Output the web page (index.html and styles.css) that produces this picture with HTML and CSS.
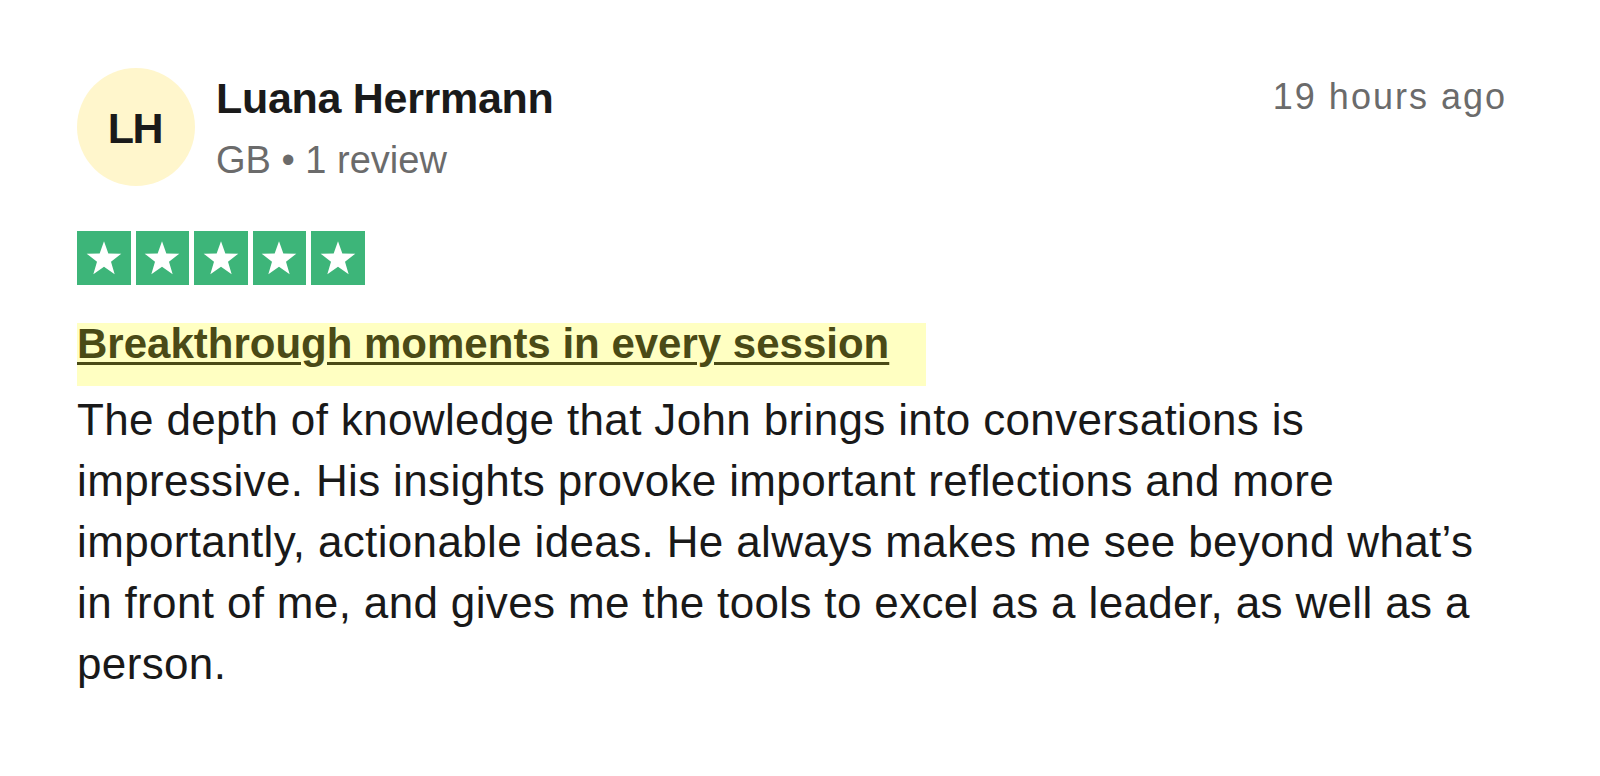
FILE: index.html
```html
<!DOCTYPE html>
<html lang="en">
<head>
<meta charset="utf-8">
<title>Review</title>
<link rel="stylesheet" href="styles.css">
</head>
<body>
<article class="review">
  <header class="review-header">
    <div class="avatar">LH</div>
    <div class="consumer">
      <div class="consumer-name">Luana Herrmann</div>
      <div class="consumer-meta">GB • 1 review</div>
    </div>
    <time class="review-date">19 hours ago</time>
  </header>
  <div class="stars" aria-label="Rated 5 out of 5">
    <span class="star-box"><svg viewBox="0 0 24 24" class="star"><polygon points="12,2 14.6,9.3 22.4,9.4 16.2,14.2 18.4,21.7 12,17.3 5.6,21.7 7.8,14.2 1.6,9.4 9.4,9.3"/></svg></span>
    <span class="star-box"><svg viewBox="0 0 24 24" class="star"><polygon points="12,2 14.6,9.3 22.4,9.4 16.2,14.2 18.4,21.7 12,17.3 5.6,21.7 7.8,14.2 1.6,9.4 9.4,9.3"/></svg></span>
    <span class="star-box"><svg viewBox="0 0 24 24" class="star"><polygon points="12,2 14.6,9.3 22.4,9.4 16.2,14.2 18.4,21.7 12,17.3 5.6,21.7 7.8,14.2 1.6,9.4 9.4,9.3"/></svg></span>
    <span class="star-box"><svg viewBox="0 0 24 24" class="star"><polygon points="12,2 14.6,9.3 22.4,9.4 16.2,14.2 18.4,21.7 12,17.3 5.6,21.7 7.8,14.2 1.6,9.4 9.4,9.3"/></svg></span>
    <span class="star-box"><svg viewBox="0 0 24 24" class="star"><polygon points="12,2 14.6,9.3 22.4,9.4 16.2,14.2 18.4,21.7 12,17.3 5.6,21.7 7.8,14.2 1.6,9.4 9.4,9.3"/></svg></span>
  </div>
  <h2 class="review-title"><a href="#">Breakthrough moments in every session</a></h2>
  <p class="review-text">The depth of knowledge that John brings into conversations is impressive. His insights provoke important reflections and more importantly, actionable ideas. He always makes me see beyond what’s in front of me, and gives me the tools to excel as a leader, as well as a person.</p>
</article>
</body>
</html>
```
FILE: styles.css
```css
html, body {
  margin: 0;
  padding: 0;
  background: #ffffff;
}

body {
  font-family: "Liberation Sans", Arial, sans-serif;
  color: #191919;
}

.review {
  width: 1430px;
  padding: 68px 0 0 77px;
}

.review-header {
  display: flex;
  align-items: flex-start;
}

.avatar {
  flex: 0 0 auto;
  width: 118px;
  height: 118px;
  border-radius: 50%;
  background: #fff6cc;
  display: flex;
  align-items: center;
  justify-content: center;
  font-weight: 700;
  font-size: 43px;
  letter-spacing: -1.5px;
  color: #1a1a1a;
  line-height: 1;
  padding-right: 2px;
  padding-top: 3px;
  box-sizing: border-box;
}

.consumer {
  flex: 1 1 auto;
  margin-left: 21px;
  padding-top: 6px;
}

.consumer-name {
  font-size: 43px;
  font-weight: 700;
  line-height: 49px;
  letter-spacing: -0.3px;
  color: #1a1a1a;
}

.consumer-meta {
  margin-top: 15px;
  font-size: 38px;
  line-height: 44px;
  color: #6b6b6b;
}

.review-date {
  flex: 0 0 auto;
  margin-top: 7px;
  font-size: 36px;
  line-height: 43px;
  letter-spacing: 2px;
  color: #6b6b6b;
}

.stars {
  display: flex;
  gap: 5px;
  margin-top: 45px;
}

.star-box {
  width: 53.5px;
  height: 53.5px;
  background: #3db579;
  display: flex;
  align-items: center;
  justify-content: center;
}

.star {
  width: 40px;
  height: 40px;
  fill: #ffffff;
}

.review-title {
  display: inline-block;
  margin: 38px 0 0 0;
  padding: 0 37px 21px 0;
  background: #ffffc2;
  font-size: 42px;
  line-height: 42px;
  font-weight: 700;
}

.review-title a {
  color: #4a4a16;
  text-decoration: underline;
  text-decoration-thickness: 3px;
  text-underline-offset: 4px;
}

.review-text {
  margin: 3px 0 0 0;
  font-size: 44px;
  line-height: 61px;
  letter-spacing: 0.35px;
  color: #191919;
}
```
